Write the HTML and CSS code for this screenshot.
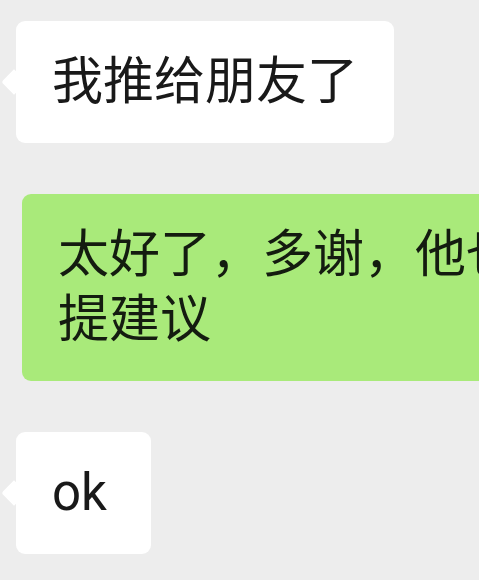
FILE: index.html
```html
<!DOCTYPE html>
<html lang="zh-CN">
<head>
<meta charset="utf-8">
<title>Chat</title>
<link rel="stylesheet" href="styles.css">
</head>
<body>
<div class="chat">
  <div class="row">
    <div class="bubble in">我推给朋友了</div>
  </div>
  <div class="row">
    <div class="bubble out">太好了，多谢，他也可以提建议</div>
  </div>
  <div class="row">
    <div class="bubble in">ok</div>
  </div>
</div>
</body>
</html>
```
FILE: styles.css
```css
html, body {
  margin: 0;
  padding: 0;
  overflow: hidden;
  background: #ededed;
}
body {
  width: 479px;
  height: 580px;
  font-family: Roboto, "Noto Sans CJK SC", sans-serif;
  color: #191919;
}
.chat {
  display: flex;
  flex-direction: column;
  align-items: flex-start;
  gap: 51px;
  padding-top: 21px;
}
.row {
  display: flex;
}
.bubble {
  position: relative;
  box-sizing: border-box;
  min-width: 135px;
  font-size: 51px;
  line-height: 65px;
  padding: 28px 36px 29px 36px;
  border-radius: 9px;
  white-space: nowrap;
}
.bubble.in {
  background: #ffffff;
  margin-left: 16px;
}
.bubble.in::before {
  content: "";
  position: absolute;
  left: -11px;
  top: 52px;
  width: 18px;
  height: 18px;
  background: #ffffff;
  transform: rotate(45deg);
  border-radius: 0 0 0 3px;
}
.bubble.out {
  background: #a9ea7a;
  margin-left: 22px;
  width: 633px;
  white-space: normal;
  color: #141c10;
}
```
